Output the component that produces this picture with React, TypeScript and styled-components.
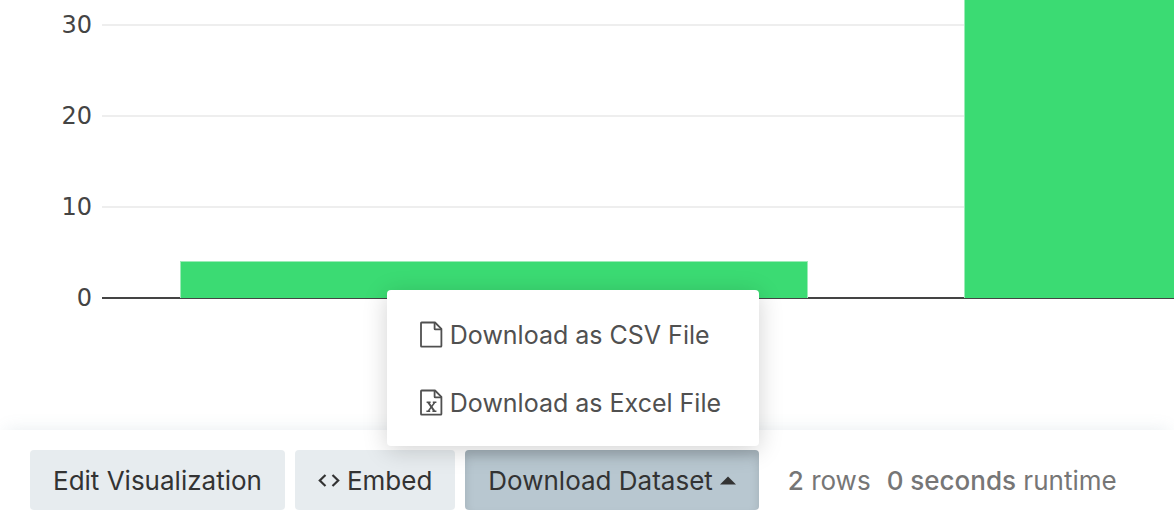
import React from "react";
import styled, { createGlobalStyle } from "styled-components";

const GlobalStyle = createGlobalStyle`
  *, *::before, *::after { box-sizing: border-box; }
  body {
    margin: 0;
    background: #fff;
    font-family: Inter, "Liberation Sans", sans-serif;
    font-size: 26px;
    line-height: 36px;
    color: #333;
    overflow: hidden;
  }
`;

const Page = styled.main`
  display: flex;
  flex-direction: column;
  min-height: 100vh;
`;

const Chart = styled.svg`
  display: block;
  flex: 1 0 auto;
  width: 100%;
  height: 430px;
`;

const TickLabel = styled.text`
  font-family: "DejaVu Sans", sans-serif;
  font-size: 24px;
  fill: #444;
  text-anchor: end;
`;

const Footer = styled.footer`
  position: relative;
  display: flex;
  align-items: center;
  gap: 10px;
  padding: 20px 30px 18px;
  background: #fff;
  box-shadow: 0 -6px 16px -6px rgba(102, 136, 153, 0.15);
  white-space: nowrap;
`;

const Button = styled.button<{ $open?: boolean }>`
  display: flex;
  align-items: center;
  gap: 7px;
  height: 60px;
  padding: 2px 23px 0;
  border: 0;
  border-radius: 4px;
  font: inherit;
  color: #333;
  cursor: pointer;
  background: ${(p) => (p.$open ? "#b8c7d0" : "#e7ecef")};
  box-shadow: ${(p) => (p.$open ? "inset 0 6px 10px rgba(0, 0, 0, 0.125)" : "none")};
`;

const Dropdown = styled.div`
  position: relative;
`;

const Menu = styled.ul`
  position: absolute;
  right: 0;
  bottom: calc(100% + 4px);
  width: 372px;
  margin: 0;
  padding: 10px 0;
  list-style: none;
  font-size: 25px;
  background: #fff;
  border-radius: 4px;
  box-shadow: 0 4px 24px rgba(0, 0, 0, 0.18);
`;

const MenuLink = styled.a`
  display: flex;
  align-items: center;
  gap: 7px;
  height: 68px;
  padding: 2px 32px 0;
  color: #505050;
  text-decoration: none;

  svg {
    flex: none;
  }
`;

const Stats = styled.div`
  display: flex;
  gap: 16px;
  margin-left: 19px;
  padding-top: 2px;
  color: #767676;

  strong {
    font-weight: 500;
  }
`;

const ticks = [30, 20, 10, 0];
const bars = [
  { x: 180, value: 4 },
  { x: 964, value: 40 },
];
const BASE = 298;
const yOf = (value: number) => Math.round(BASE - value * 9.1);

function FileIcon({ excel = false }: { excel?: boolean }) {
  return (
    <svg width="24" height="28" viewBox="0 0 24 28" fill="none" stroke="currentColor" strokeWidth="1.8" strokeLinejoin="round" aria-hidden="true">
      <path d="M2.6 1.500H16l6.400 6.400V25q0 .6-.6.600H2.600q-.6 0-.6-.6V2.100q0-.6.6-.6z" />
      <path d="M15.600 1.500v6.200q0 .7.7.7H22.400" />
      {excel && (
        <g strokeWidth="1.500">
          <path d="M9.300 13.500l6 8.500" strokeWidth="2.100" />
          <path d="M15.600 13.500l-6.200 8.500" />
          <path d="M7.600 13.200h4M13.800 13.200h3.600M7.400 22.200h3.800M13.400 22.200h4" />
        </g>
      )}
    </svg>
  );
}

export default function App() {
  return (
    <>
      <GlobalStyle />
      <Page>
        <Chart role="img" aria-label="Bar chart">
          {ticks.slice(0, 3).map((t) => (
            <line key={t} x1="102" x2="100%" y1={yOf(t)} y2={yOf(t)} stroke="#eee" strokeWidth="2" />
          ))}
          <line x1="102" x2="100%" y1={BASE} y2={BASE} stroke="#444" strokeWidth="2" />
          {bars.map((b) => (
            <g key={b.x}>
              <rect x={b.x} y={yOf(b.value) - 1} width="628" height={BASE - yOf(b.value) + 1} fill="#9cecb7" />
              <rect x={b.x + 1} y={yOf(b.value)} width="626" height={BASE - yOf(b.value)} fill="#3bdb73" />
            </g>
          ))}
          {ticks.map((t) => (
            <TickLabel key={t} x="92" y={yOf(t) + 8}>{t}</TickLabel>
          ))}
        </Chart>
        <Footer>
          <Button type="button">Edit Visualization</Button>
          <Button type="button">
            <svg width="22" height="16" viewBox="0 0 22 16" fill="none" stroke="currentColor" strokeWidth="2.200" aria-hidden="true">
              <path d="M7.500 2L1.800 7.500l5.700 5.500M14.500 2l5.700 5.500-5.700 5.500" />
            </svg>
            Embed
          </Button>
          <Dropdown>
            <Button type="button" $open aria-haspopup="menu" aria-expanded="true">
              Download Dataset
              <svg width="16" height="10" viewBox="0 0 16 10" fill="currentColor" aria-hidden="true">
                <path d="M0 8.500L8 .5l8 8z" />
              </svg>
            </Button>
            <Menu>
              <li><MenuLink href="#csv"><FileIcon />Download as CSV File</MenuLink></li>
              <li><MenuLink href="#excel"><FileIcon excel />Download as Excel File</MenuLink></li>
            </Menu>
          </Dropdown>
          <Stats>
            <span><strong>2</strong> rows</span>
            <span><strong>0 seconds</strong> runtime</span>
          </Stats>
        </Footer>
      </Page>
    </>
  );
}
